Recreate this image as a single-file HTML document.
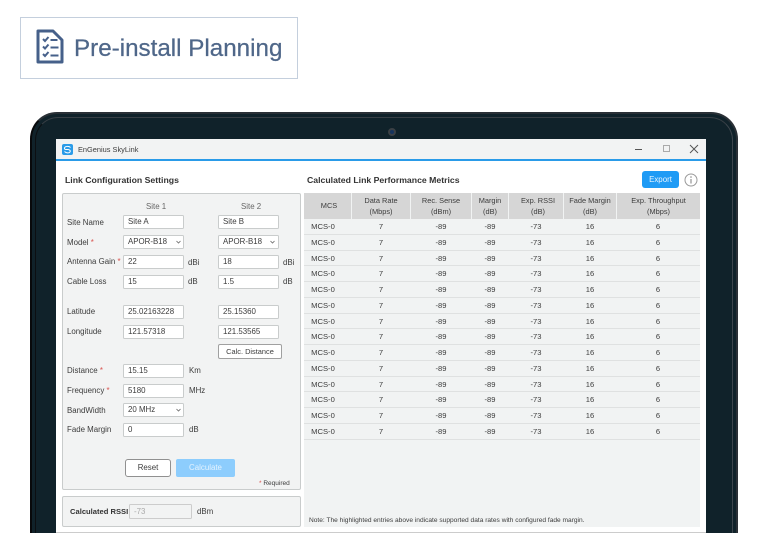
<!DOCTYPE html>
<html><head><meta charset="utf-8"><style>
*{box-sizing:border-box}
html,body{margin:0;padding:0;background:#fff;width:768px;height:533px;overflow:hidden}
#p{position:relative;width:768px;height:533px;overflow:hidden;background:#fff;font-family:"Liberation Sans",sans-serif;font-size:7.9px;color:#3c3c3c;filter:blur(.35px)}
#p div,#p span{position:absolute;white-space:nowrap}
.t{line-height:12px;height:12px}
.in{height:14px;background:#fff;border:1px solid #c9cccc;border-radius:1.5px;line-height:12px;padding-left:4px;color:#3c3c3c;width:61px}
.r{color:#d9534f}
.row{left:304px;width:396px;height:15.75px;border-bottom:1px solid #dfe1e1;font-size:7.6px}
.row span{top:2px;line-height:12px;transform:translateX(-50%)}
.hd{top:193px;height:26px;background:#d6d6d6;text-align:center;line-height:10.5px;padding-top:3px;font-size:7.4px;color:#3c3c3c}
</style></head><body><div id="p">
<div style="left:20px;top:17px;width:278px;height:62px;border:1px solid #c4cfdd"></div>
<svg style="position:absolute;left:36px;top:29px" width="28" height="35" viewBox="0 0 28 35" fill="none" stroke="#46608a">
<path d="M2 2H17L26 11V33H2Z" stroke-width="3" stroke-linejoin="round"/>
<path d="M7 10l2 2 3.500-4M7 17.500l2 2 3.500-4M7 25l2 2 3.500-4" stroke-width="2"/>
<path d="M14.500 11H21.500M14.500 18.500H22.500M14.500 26.500H22.500" stroke-width="2"/>
</svg>
<div style="left:74px;top:33px;height:32px;line-height:32px;font-size:24.2px;color:#4f6789;-webkit-text-stroke:.25px #4f6789">Pre-install Planning</div>

<div style="left:30px;top:112px;width:708px;height:421px;background:#10222a;border-radius:27px 27px 0 0;border:2px solid #2a3036;border-bottom:0;border-left-color:#08090b"></div>
<div style="left:35px;top:117px;width:698px;height:416px;border:1px solid #3d464d;border-bottom:0;border-radius:23px 23px 0 0;border-left-color:#0c0f12;border-top-color:#383f45"></div>
<div style="left:388px;top:128px;width:8px;height:8px;border-radius:50%;background:#16345e;border:2px solid #3a4045"></div>

<div style="left:56px;top:139px;width:650px;height:394px;background:#fff"></div>
<div style="left:56px;top:532px;width:650px;height:1px;background:#ccc"></div>
<div style="left:56px;top:139px;width:650px;height:20px;background:#f2f3f3"></div>
<div style="left:56px;top:159px;width:650px;height:2px;background:#2a9be8"></div>
<svg style="position:absolute;left:62px;top:144px" width="11" height="11" viewBox="0 0 11 11"><rect width="11" height="11" rx="2" fill="#2a9be8"/><path d="M8.500 3.500C7 2 3 2 2.500 4S5 5.500 6 5.500 9 6.500 8 8 4 9 2.500 7.500" stroke="#fff" fill="none" stroke-width="1"/></svg>
<div class="t" style="left:78px;top:144px;font-size:7.4px">EnGenius SkyLink</div>
<div style="left:635px;top:149px;width:7px;height:1px;background:#555"></div>
<div style="left:663px;top:145px;width:7px;height:7px;border:1px solid #aaa"></div>
<svg style="position:absolute;left:689px;top:144px" width="10" height="10" viewBox="0 0 10 10"><path d="M1 1L9 9M9 1L1 9" stroke="#555" stroke-width="1"/></svg>

<div class="t" style="left:65px;top:174px;font-size:8.7px;font-weight:700;color:#333">Link Configuration Settings</div>
<div class="t" style="left:307px;top:174px;font-size:8.7px;font-weight:700;color:#333">Calculated Link Performance Metrics</div>

<div style="left:62px;top:193px;width:239px;height:297px;background:#f2f3f3;border:1px solid #c9cccc;border-radius:2px"></div>
<div class="t" style="left:146px;top:201px;color:#666">Site 1</div>
<div class="t" style="left:241px;top:201px;color:#666">Site 2</div>

<div class="t" style="left:67px;top:217px">Site Name</div>
<div class="in" style="left:123px;top:215px">Site A</div>
<div class="in" style="left:218px;top:215px">Site B</div>

<div class="t" style="left:67px;top:237px">Model <span class="r" style="position:static">*</span></div>
<div class="in" style="left:123px;top:235px">APOR-B18</div>
<div class="in" style="left:218px;top:235px">APOR-B18</div>
<svg style="position:absolute;left:176px;top:240px" width="5" height="4"><path d="M.5 1L2.500 3 4.500 1" stroke="#666" fill="none" stroke-width=".8"/></svg>
<svg style="position:absolute;left:270px;top:240px" width="5" height="4"><path d="M.5 1L2.500 3 4.500 1" stroke="#666" fill="none" stroke-width=".8"/></svg>

<div class="t" style="left:67px;top:256px">Antenna Gain <span class="r" style="position:static">*</span></div>
<div class="in" style="left:123px;top:255px">22</div>
<div class="t" style="left:188px;top:257px">dBi</div>
<div class="in" style="left:218px;top:255px">18</div>
<div class="t" style="left:283px;top:257px">dBi</div>

<div class="t" style="left:67px;top:276px">Cable Loss</div>
<div class="in" style="left:123px;top:275px">15</div>
<div class="t" style="left:188px;top:276px">dB</div>
<div class="in" style="left:218px;top:275px">1.5</div>
<div class="t" style="left:283px;top:276px">dB</div>

<div class="t" style="left:67px;top:306px">Latitude</div>
<div class="in" style="left:123px;top:305px">25.02163228</div>
<div class="in" style="left:218px;top:305px">25.15360</div>
<div class="t" style="left:67px;top:326px">Longitude</div>
<div class="in" style="left:123px;top:325px">121.57318</div>
<div class="in" style="left:218px;top:325px">121.53565</div>
<div style="left:218px;top:344px;width:64px;height:15px;background:#fff;border:1px solid #a0a0a0;border-radius:2px;text-align:center;line-height:13px;font-size:7.4px">Calc. Distance</div>

<div class="t" style="left:67px;top:365px">Distance <span class="r" style="position:static">*</span></div>
<div class="in" style="left:123px;top:364px">15.15</div>
<div class="t" style="left:189px;top:365px">Km</div>
<div class="t" style="left:67px;top:385px">Frequency <span class="r" style="position:static">*</span></div>
<div class="in" style="left:123px;top:384px">5180</div>
<div class="t" style="left:189px;top:385px">MHz</div>
<div class="t" style="left:67px;top:405px">BandWidth</div>
<div class="in" style="left:123px;top:403px">20 MHz</div>
<svg style="position:absolute;left:176px;top:408px" width="5" height="4"><path d="M.5 1L2.500 3 4.500 1" stroke="#666" fill="none" stroke-width=".8"/></svg>
<div class="t" style="left:67px;top:424px">Fade Margin</div>
<div class="in" style="left:123px;top:423px">0</div>
<div class="t" style="left:189px;top:424px">dB</div>

<div style="left:125px;top:459px;width:46px;height:18px;background:#fff;border:1px solid #909090;border-radius:3px;text-align:center;line-height:16px">Reset</div>
<div style="left:176px;top:459px;width:59px;height:18px;background:#8dcdfd;border-radius:2px;text-align:center;line-height:18px;color:#e4f3ff">Calculate</div>
<div class="t" style="left:259px;top:478px;font-size:6.5px"><span class="r" style="position:static">*</span> Required</div>

<div style="left:62px;top:496px;width:239px;height:31px;background:#f2f3f3;border:1px solid #c9cccc;border-radius:2px"></div>
<div class="t" style="left:70px;top:506px;font-weight:700;font-size:7.6px;color:#333">Calculated RSSI</div>
<div style="left:129px;top:504px;width:63px;height:15px;background:#f2f3f3;border:1px solid #ccc;border-radius:1.500px;padding-left:4px;line-height:13px;color:#aaa">-73</div>
<div class="t" style="left:197px;top:506px">dBm</div>

<div style="left:642px;top:171px;width:37px;height:17px;background:#1f9bf5;border-radius:3px;text-align:center;line-height:18px;color:#e8f5ff">Export</div>
<svg style="position:absolute;left:684px;top:173px" width="14" height="14" viewBox="0 0 14 14"><circle cx="7" cy="7" r="6" stroke="#999" fill="none"/><path d="M7 6v4.500" stroke="#888" stroke-width="1.100"/><circle cx="7" cy="4" r=".8" fill="#888"/></svg>

<div style="left:304px;top:193px;width:396px;height:334px;background:#f1f3f3"></div>
<div class="hd" style="left:304px;width:47px;line-height:20px;padding-left:3px">MCS</div>
<div class="hd" style="left:352px;width:58px">Data Rate<br>(Mbps)</div>
<div class="hd" style="left:411px;width:60px">Rec. Sense<br>(dBm)</div>
<div class="hd" style="left:472px;width:36px">Margin<br>(dB)</div>
<div class="hd" style="left:509px;width:54px;padding-left:4px">Exp. RSSI<br>(dB)</div>
<div class="hd" style="left:564px;width:52px">Fade Margin<br>(dB)</div>
<div class="hd" style="left:617px;width:83px">Exp. Throughput<br>(Mbps)</div>

<div class="row" style="top:219px"><span style="left:19px">MCS-0</span><span style="left:77px">7</span><span style="left:137px">-89</span><span style="left:186px">-89</span><span style="left:232px">-73</span><span style="left:286px">16</span><span style="left:354px">6</span></div>
<div class="row" style="top:234.750px"><span style="left:19px">MCS-0</span><span style="left:77px">7</span><span style="left:137px">-89</span><span style="left:186px">-89</span><span style="left:232px">-73</span><span style="left:286px">16</span><span style="left:354px">6</span></div>
<div class="row" style="top:250.500px"><span style="left:19px">MCS-0</span><span style="left:77px">7</span><span style="left:137px">-89</span><span style="left:186px">-89</span><span style="left:232px">-73</span><span style="left:286px">16</span><span style="left:354px">6</span></div>
<div class="row" style="top:266.250px"><span style="left:19px">MCS-0</span><span style="left:77px">7</span><span style="left:137px">-89</span><span style="left:186px">-89</span><span style="left:232px">-73</span><span style="left:286px">16</span><span style="left:354px">6</span></div>
<div class="row" style="top:282px"><span style="left:19px">MCS-0</span><span style="left:77px">7</span><span style="left:137px">-89</span><span style="left:186px">-89</span><span style="left:232px">-73</span><span style="left:286px">16</span><span style="left:354px">6</span></div>
<div class="row" style="top:297.750px"><span style="left:19px">MCS-0</span><span style="left:77px">7</span><span style="left:137px">-89</span><span style="left:186px">-89</span><span style="left:232px">-73</span><span style="left:286px">16</span><span style="left:354px">6</span></div>
<div class="row" style="top:313.500px"><span style="left:19px">MCS-0</span><span style="left:77px">7</span><span style="left:137px">-89</span><span style="left:186px">-89</span><span style="left:232px">-73</span><span style="left:286px">16</span><span style="left:354px">6</span></div>
<div class="row" style="top:329.250px"><span style="left:19px">MCS-0</span><span style="left:77px">7</span><span style="left:137px">-89</span><span style="left:186px">-89</span><span style="left:232px">-73</span><span style="left:286px">16</span><span style="left:354px">6</span></div>
<div class="row" style="top:345px"><span style="left:19px">MCS-0</span><span style="left:77px">7</span><span style="left:137px">-89</span><span style="left:186px">-89</span><span style="left:232px">-73</span><span style="left:286px">16</span><span style="left:354px">6</span></div>
<div class="row" style="top:360.750px"><span style="left:19px">MCS-0</span><span style="left:77px">7</span><span style="left:137px">-89</span><span style="left:186px">-89</span><span style="left:232px">-73</span><span style="left:286px">16</span><span style="left:354px">6</span></div>
<div class="row" style="top:376.500px"><span style="left:19px">MCS-0</span><span style="left:77px">7</span><span style="left:137px">-89</span><span style="left:186px">-89</span><span style="left:232px">-73</span><span style="left:286px">16</span><span style="left:354px">6</span></div>
<div class="row" style="top:392.250px"><span style="left:19px">MCS-0</span><span style="left:77px">7</span><span style="left:137px">-89</span><span style="left:186px">-89</span><span style="left:232px">-73</span><span style="left:286px">16</span><span style="left:354px">6</span></div>
<div class="row" style="top:408px"><span style="left:19px">MCS-0</span><span style="left:77px">7</span><span style="left:137px">-89</span><span style="left:186px">-89</span><span style="left:232px">-73</span><span style="left:286px">16</span><span style="left:354px">6</span></div>
<div class="row" style="top:423.750px"><span style="left:19px">MCS-0</span><span style="left:77px">7</span><span style="left:137px">-89</span><span style="left:186px">-89</span><span style="left:232px">-73</span><span style="left:286px">16</span><span style="left:354px">6</span></div>

<div class="t" style="left:309px;top:515px;font-size:6.6px">Note: The highlighted entries above indicate supported data rates with configured fade margin.</div>
</div></body></html>
